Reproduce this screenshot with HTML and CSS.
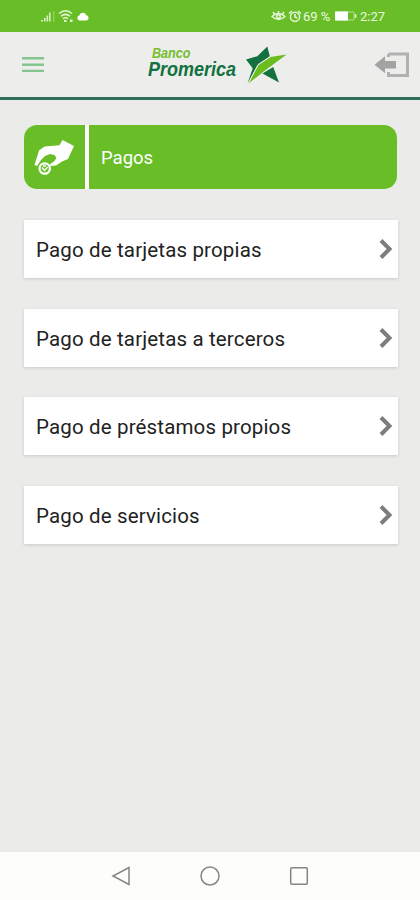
FILE: index.html
```html
<!DOCTYPE html>
<html lang="es">
<head>
  <meta charset="UTF-8">
  <meta name="viewport" content="width=device-width, initial-scale=1.0">
  <title>Pagos</title>
  <link rel="stylesheet" href="styles.css">
</head>
<body>
  <div class="status-bar">
    <svg class="status-left" width="50" height="14" viewBox="40 9 50 14">
      <path d="M41 21.500h2v-1.500h-2zM44 21.500h1.600v-3.500h-1.600zM46.500 21.500h1.600v-6h-1.600zM49 21.500h1.600v-9h-1.600z" fill="#d5efc2"/>
      <path d="M53.800 11v11" stroke="#a0d67a" stroke-width="1"/>
      <g fill="none" stroke="#e3f5d6" stroke-width="1.500">
        <path d="M59 13.500q6.500-5.500 13 0M61 16.300q4.500-3.800 9 0M63 18.700q2.500-2 5 0"/>
      </g>
      <path d="M64 20h2.500v2H64zM70 19.500h2.500v2.500H70z" fill="#e3f5d6"/>
      <path d="M79.500 20.500a2.600 2.600 0 0 1-.2-5.100 3.700 3.700 0 0 1 7-.2 2.700 2.700 0 0 1 .2 5.300z" fill="#fff"/>
    </svg>
    <div class="status-right">
      <svg width="32" height="14" viewBox="271 9 32 14" fill="none" stroke="#e6f6da" stroke-width="1.500">
        <path d="M272 16.500q6.500-6 13 0q-6.500 6-13 0zM273 12l1.500 2M278.500 11v2.500M284 12l-1.500 2"/>
        <circle cx="278.500" cy="16.500" r="1.800"/>
        <circle cx="295" cy="16.800" r="4.600"/>
        <path d="M295 14v3l2.300 1M289 13.500l3-2.500M301 13.500l-3-2.500"/>
      </svg>
      <span class="percent">69 %</span>
      <svg width="23" height="12" viewBox="0 0 23 12">
        <rect x="1.500" y="2" width="18.500" height="8" rx="1" fill="#69be28" stroke="#b5e094"/>
        <rect x="1" y="1.500" width="13" height="9" fill="#fff"/>
        <path d="M21.500 4v4" stroke="#e6f6da" stroke-width="1.500"/>
      </svg>
      <span class="clock">2:27</span>
    </div>
  </div>

  <div class="header">
    <svg class="menu" width="22" height="16" viewBox="0 0 22 16">
      <path d="M0 1.300h22M0 7.700h22M0 13.900h22" stroke="#84c590" stroke-width="2.400"/>
    </svg>
    <svg class="logo" width="142" height="42" viewBox="146 43 142 42">
      <text class="logo-banco" x="152" y="57" textLength="38.500" lengthAdjust="spacingAndGlyphs">Banco</text>
      <text class="logo-name" x="148" y="74.500" textLength="88" lengthAdjust="spacingAndGlyphs">Promerica</text>
      <path d="M267.300 45.500L269.800 55.300 258 63.500 247.500 82.500 252.700 67.300 246 58.500 257.300 55.200z" fill="#13713f"/>
      <path d="M273.200 66L279 81.500 262.500 72.500z" fill="#13713f"/>
      <path d="M286.500 53.500L270.500 56 258.500 64 248.500 82.500 265 69.500z" fill="#6abd1f"/>
      <path d="M270.500 55.500L258 63.600 248.500 82" fill="none" stroke="#ededec" stroke-width=".8"/>
    </svg>
    <svg class="exit" width="36" height="26" viewBox="374 52 36 26">
      <path d="M388.500 54H407.500V75.500H388.500V72M388.500 54v3" fill="none" stroke="#b1b1b1" stroke-width="3"/>
      <path d="M374.500 64.700l10.500-8.500v4.700h11v7.600h-11v4.700z" fill="#a3a3a3"/>
    </svg>
  </div>

  <div class="content">
    <div class="banner">
      <div class="banner-icon">
        <svg width="42" height="38" viewBox="34 138 42 38">
          <path d="M62.500 140l11.500 6-6 13-6 2.500-6 4-5 .5-1.500-1.500 4.500-3 2.500-3.500-2-3-4.500-1-5 2-4 4-4 6-2.500-1 4.500-14.500 5.500-4 15-1.300z" fill="#fff"/>
          <circle cx="44.700" cy="168.500" r="5.200" fill="#69be28" stroke="#fff" stroke-width="2.200"/>
          <path d="M42 167.500l2.500 3 3.200-3.500M43 166h3" fill="none" stroke="#fff" stroke-width="1.400"/>
        </svg>
      </div>
      <div class="banner-title">Pagos</div>
    </div>

    <div class="options">
      <a class="option" href="#">
        <span>Pago de tarjetas propias</span>
        <svg class="arrow" width="14" height="22" viewBox="0 0 14 22"><path d="M2 2.500l8.500 8.500L2 19.500"/></svg>
      </a>
      <a class="option" href="#">
        <span>Pago de tarjetas a terceros</span>
        <svg class="arrow" width="14" height="22" viewBox="0 0 14 22"><path d="M2 2.500l8.500 8.500L2 19.500"/></svg>
      </a>
      <a class="option" href="#">
        <span>Pago de préstamos propios</span>
        <svg class="arrow" width="14" height="22" viewBox="0 0 14 22"><path d="M2 2.500l8.500 8.500L2 19.500"/></svg>
      </a>
      <a class="option" href="#">
        <span>Pago de servicios</span>
        <svg class="arrow" width="14" height="22" viewBox="0 0 14 22"><path d="M2 2.500l8.500 8.500L2 19.500"/></svg>
      </a>
    </div>
  </div>

  <div class="nav-bar">
    <svg width="20" height="20" viewBox="0 0 20 20"><path d="M18 1.500v17L2 10z"/></svg>
    <svg width="20" height="20" viewBox="0 0 20 20"><circle cx="10" cy="10" r="9"/></svg>
    <svg width="20" height="20" viewBox="0 0 20 20"><rect x="1.700" y="1.700" width="16.600" height="16.600" rx="1"/></svg>
  </div>
</body>
</html>
```

FILE: styles.css
```css
* {
  box-sizing: border-box;
}
body {
  margin: 0;
  height: 900px;
  display: flex;
  flex-direction: column;
  background-color: #ebebea;
  font-family: Roboto, sans-serif;
}
svg {
  display: block;
  flex-shrink: 0;
}
.status-bar {
  height: 32px;
  padding: 0 34px 0 40px;
  display: flex;
  align-items: center;
  justify-content: space-between;
  background-color: #69be28;
  color: #eaf8e0;
}
.status-right {
  display: flex;
  align-items: center;
  font-size: 13px;
}
.percent {
  width: 31px;
  font-size: 13px;
  white-space: nowrap;
}
.clock {
  width: 26px;
  margin-left: 3px;
}
.header {
  height: 68px;
  padding: 0 10px 0 22px;
  display: flex;
  align-items: center;
  background-color: #ededec;
  border-bottom: 3px solid #2f705a;
}
.logo {
  margin-left: 102px;
}
.logo text {
  font-family: "Liberation Sans Narrow", "Liberation Sans", sans-serif;
  font-weight: bold;
  font-style: italic;
}
.logo-banco {
  font-size: 14px;
  fill: #76be2c;
}
.logo-name {
  font-size: 20.5px;
  fill: #13713f;
}
.exit {
  margin-left: auto;
}
.content {
  flex: 1;
  padding: 25px 22px 0 24px;
}
.banner {
  height: 64px;
  width: 373px;
  display: flex;
  gap: 4px;
  border-radius: 13px;
  overflow: hidden;
  background-color: #fff;
  color: #fff;
}
.banner-icon {
  width: 61px;
  display: flex;
  align-items: center;
  justify-content: center;
  background-color: #69be28;
}
.banner-title {
  flex: 1;
  padding: 2px 0 0 12px;
  display: flex;
  align-items: center;
  background-color: #69be28;
  font-size: 18.5px;
}
.options {
  margin-top: 31px;
  display: flex;
  flex-direction: column;
  gap: 30.7px;
}
.option {
  height: 58px;
  padding: 2px 5px 0 12px;
  display: flex;
  align-items: center;
  justify-content: space-between;
  background-color: #fff;
  box-shadow: 0 1px 3px rgba(0, 0, 0, 0.15);
  color: #222;
  font-size: 20.5px;
  letter-spacing: 0.15px;
  text-decoration: none;
}
.arrow {
  margin-top: -2px;
}
.arrow path {
  fill: none;
  stroke: #7d7d7d;
  stroke-width: 4;
}
.nav-bar {
  height: 48px;
  display: flex;
  align-items: center;
  justify-content: center;
  gap: 69px;
  background-color: #fdfdfc;
}
.nav-bar svg {
  fill: none;
  stroke: #858585;
  stroke-width: 1.5;
}
```
